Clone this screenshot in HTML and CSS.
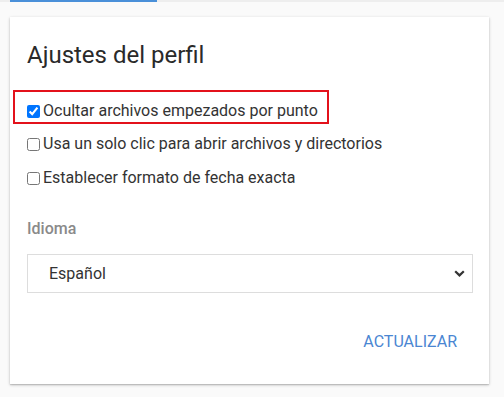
FILE: index.html
```html
<!DOCTYPE html>
<html lang="es">
<head>
<meta charset="utf-8">
<link rel="stylesheet" href="styles.css">
</head>
<body>
<div class="tabbar"><div class="tab-indicator"></div></div>
<div class="card">
  <h2 class="title">Ajustes del perfil</h2>
  <div class="highlight">
    <label class="opt"><input type="checkbox" checked>Ocultar archivos empezados por punto</label>
  </div>
  <label class="opt opt-2"><input type="checkbox">Usa un solo clic para abrir archivos y directorios</label>
  <label class="opt opt-3"><input type="checkbox">Establecer formato de fecha exacta</label>
  <div class="field-label">Idioma</div>
  <div class="select">
    <span class="select-value">Español</span>
    <svg class="chevron" width="11" height="7" viewBox="0 0 11 7"><path d="M1.2 1.2 L5.5 5.4 L9.8 1.2" fill="none" stroke="#333" stroke-width="2.2"/></svg>
  </div>
  <div class="actions"><button class="btn">ACTUALIZAR</button></div>
</div>
</body>
</html>
```
FILE: styles.css
```css
html, body {
  margin: 0;
  padding: 0;
}
body {
  background: #fafafa;
  font-family: Roboto, "Liberation Sans", sans-serif;
  color: #333;
  width: 504px;
  height: 397px;
  overflow: hidden;
}
.tabbar {
  height: 2px;
  background: #eeeeee;
}
.tab-indicator {
  margin-left: 10px;
  width: 147px;
  height: 2px;
  background: #4a90d9;
}
.card {
  margin: 15px 0 0 10px;
  width: 479px;
  box-sizing: border-box;
  padding: 24px 16px 24px 17px;
  background: #fff;
  box-shadow: 0 1px 3px rgba(0,0,0,0.22), 0 1px 1px rgba(0,0,0,0.12);
}
.title {
  margin: 0;
  font-size: 24px;
  line-height: 28px;
  font-weight: 400;
  color: #2a2a2a;
}
.highlight {
  margin: 21px 0 0 -14px;
  width: fit-content;
  border: 2px solid #e3111b;
  padding: 9px 9px 1px 12px;
}
.opt {
  display: block;
  font-size: 16px;
  line-height: 20px;
  color: #333;
  white-space: nowrap;
}
.opt input {
  margin: 3px 3px 3px 0;
  width: 13px;
  height: 13px;
  vertical-align: -2px;
}
.opt-2 {
  margin-top: 10px;
}
.opt-3 {
  margin-top: 14px;
}
.field-label {
  margin-top: 31px;
  font-size: 16px;
  line-height: 20px;
  font-weight: 500;
  color: #8a8a8a;
}
.select {
  margin-top: 15px;
  height: 39px;
  box-sizing: border-box;
  border: 1px solid #dddddd;
  display: flex;
  align-items: center;
  justify-content: space-between;
  padding: 0 7px 0 21px;
}
.select-value {
  font-size: 16px;
  color: #333;
}
.chevron {
  display: block;
}
.actions {
  margin-top: 31px;
  display: flex;
  justify-content: flex-end;
}
.btn {
  border: none;
  background: none;
  padding: 8px 16px;
  font-family: Roboto, "Liberation Sans", sans-serif;
  font-size: 16px;
  line-height: 20px;
  color: #4a86d2;
  font-weight: 400;
}
```
